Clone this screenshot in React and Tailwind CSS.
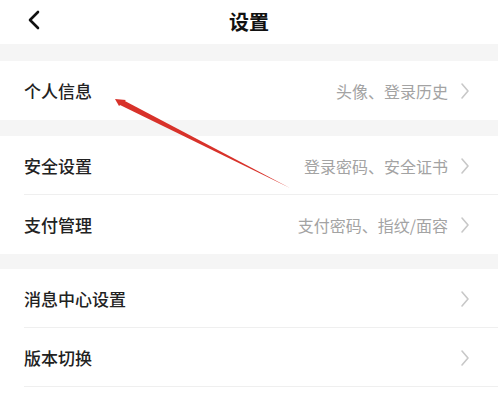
const font = { fontFamily: '"Noto Sans CJK SC", "Noto Sans", sans-serif' };

const Chevron = () => (
  <svg width="10" height="18" viewBox="0 0 10 18" className="ml-3 shrink-0">
    <path d="M2 2 L8 9 L2 16" fill="none" stroke="#c8c8c8" strokeWidth="1.6" strokeLinecap="round" strokeLinejoin="round" />
  </svg>
);

const Row = ({ title, hint, divider }) => (
  <div className="relative flex items-center h-[59px] pl-6 pr-7 bg-white">
    <span className="text-[17px] font-medium text-[#222]">{title}</span>
    <div className="ml-auto flex items-center">
      {hint && <span className="text-[16px] text-[#a3a3a3]">{hint}</span>}
      <Chevron />
    </div>
    {divider && <div className="absolute bottom-0 left-6 right-0 h-px bg-[#efefef]" />}
  </div>
);

export default function App() {
  return (
    <div className="relative w-[498px] h-[409px] overflow-hidden bg-white" style={font}>
      <div className="relative flex items-center justify-center h-[44px] bg-white">
        <svg width="14" height="20" viewBox="0 0 14 20" className="absolute left-[27px] top-[10px]">
          <path d="M11 2 L3 10 L11 18" fill="none" stroke="#111" strokeWidth="2.6" strokeLinecap="round" strokeLinejoin="round" />
        </svg>
        <span className="text-[20px] font-bold text-[#111]">设置</span>
      </div>
      <div className="bg-[#f5f5f5] h-[17px]" />
      <Row title="个人信息" hint="头像、登录历史" />
      <div className="bg-[#f5f5f5] h-[16px]" />
      <Row title="安全设置" hint="登录密码、安全证书" divider />
      <Row title="支付管理" hint="支付密码、指纹/面容" />
      <div className="bg-[#f5f5f5] h-[15px]" />
      <Row title="消息中心设置" divider />
      <Row title="版本切换" divider />
      <Row title="换肤中心" />
      <svg width="498" height="409" className="absolute inset-0 pointer-events-none">
        <polygon points="117,100 123,100 290,188 120,105" fill="#d8322a" />
        <polygon points="115,99 126,100 119,106" fill="#d8322a" />
      </svg>
    </div>
  );
}
